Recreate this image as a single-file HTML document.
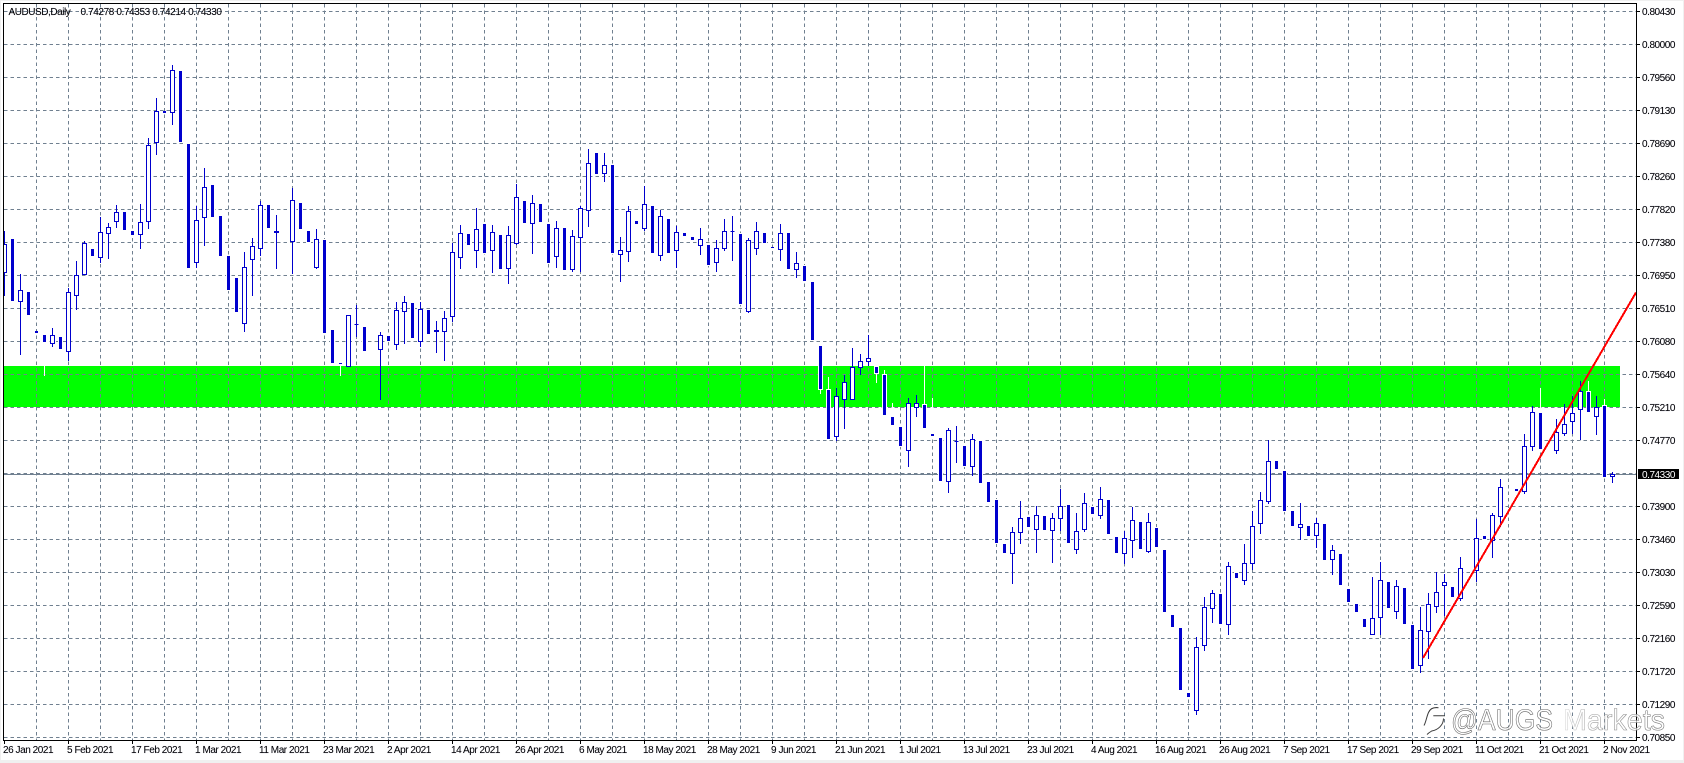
<!DOCTYPE html>
<html lang="en">
<head>
<meta charset="utf-8">
<title>AUDUSD,Daily</title>
<style>
html,body{margin:0;padding:0;background:#fff;width:1684px;height:763px;overflow:hidden}
svg{display:block}
text{font-family:"Liberation Sans",sans-serif;font-size:10px;letter-spacing:-.45px;fill:#000;stroke:rgba(0,0,50,.35);stroke-width:.2px}
</style>
</head>
<body>
<svg width="1684" height="763" viewBox="0 0 1684 763" xmlns="http://www.w3.org/2000/svg">
<defs>
<linearGradient id="wm" gradientUnits="userSpaceOnUse" x1="1563" y1="0" x2="1665" y2="0">
<stop offset="0" stop-color="#dcdcdc"/>
<stop offset=".3" stop-color="#a0a0a0"/>
<stop offset="1" stop-color="#777"/>
</linearGradient>
</defs>
<rect width="1684" height="763" fill="#fff"/>
<path d="M0 .5H1684M.5 0V763" stroke="#f0f0f0" fill="none"/>
<rect y="760" width="1684" height="3" fill="#f0f0f0"/>
<rect x="1683" width="1" height="763" fill="#f0f0f0"/>
<rect x="4" y="366" width="1616" height="41" fill="#00ff00"/>
<g fill="none" stroke="#708090" stroke-width="1">
<path stroke-dasharray="3.5 3" d="M4 11.5H1636M4 44.5H1636M4 77.5H1636M4 110.5H1636M4 143.5H1636M4 176.5H1636M4 209.5H1636M4 242.5H1636M4 275.5H1636M4 308.5H1636M4 341.5H1636M4 374.5H1636M4 407.5H1636M4 440.5H1636M4 473.5H1636M4 506.5H1636M4 539.5H1636M4 572.5H1636M4 605.5H1636M4 638.5H1636M4 671.5H1636M4 704.5H1636M4 737.5H1636"/>
<path stroke-dasharray="3.5 3" d="M36.5 4V740M68.5 4V740M100.5 4V740M132.5 4V740M164.5 4V740M196.5 4V740M228.5 4V740M260.5 4V740M292.5 4V740M324.5 4V740M356.5 4V740M388.5 4V740M420.5 4V740M452.5 4V740M484.5 4V740M516.5 4V740M548.5 4V740M580.5 4V740M612.5 4V740M644.5 4V740M676.5 4V740M708.5 4V740M740.5 4V740M772.5 4V740M804.5 4V740M836.5 4V740M868.5 4V740M900.5 4V740M932.5 4V740M964.5 4V740M996.5 4V740M1028.5 4V740M1060.5 4V740M1092.5 4V740M1124.5 4V740M1156.5 4V740M1188.5 4V740M1220.5 4V740M1252.5 4V740M1284.5 4V740M1316.5 4V740M1348.5 4V740M1380.5 4V740M1412.5 4V740M1444.5 4V740M1476.5 4V740M1508.5 4V740M1540.5 4V740M1572.5 4V740M1604.5 4V740"/>
<path d="M4 474.5H1636"/>
</g>
<g fill="none" shape-rendering="crispEdges">
<!-- bear halos + white wicks -->
<path stroke="#fff" stroke-width="5" d="M820.5 345V390M828.5 389V440M876.5 366V374M884.5 374V416M892.5 416V426M900.5 426V447M924.5 404V429M932.5 433V437M1540.5 412V450M1588.5 391V413M1604.5 405V478M12.5 238V302M28.5 291V316M44.5 334V343M60.5 336V350M92.5 248V257M124.5 211V231M132.5 230V236M180.5 70V143M188.5 143V269M212.5 184V218M220.5 215V257M228.5 255V291M236.5 277V313M268.5 204V229M300.5 202V230M308.5 230V243M324.5 239V334M332.5 329V364M364.5 326V352M388.5 335V342M412.5 302V339M428.5 309V335M468.5 233V246M484.5 223V254M500.5 234V270M524.5 200V224M540.5 203V223M548.5 223V264M564.5 227V271M596.5 152V175M612.5 164V254M652.5 205V254M668.5 218V254M708.5 244V266M740.5 233V305M764.5 232V244M788.5 232V270M804.5 265V282M812.5 281V341M940.5 437V482M964.5 445V467M980.5 440V484M988.5 481V503M996.5 499V544M1004.5 543V554M1028.5 516V528M1044.5 515V531M1068.5 504V544M1092.5 506V515M1108.5 499V535M1116.5 536V554M1140.5 521V550M1156.5 527V548M1164.5 549V613M1172.5 614V628M1180.5 627V691M1188.5 692V698M1220.5 593V625M1236.5 572V579M1276.5 460V470M1284.5 470V512M1292.5 510V527M1308.5 525V537M1324.5 523V561M1340.5 553V586M1348.5 588V603M1356.5 603V613M1364.5 618V628M1388.5 581V609M1404.5 587V625M1412.5 624V670M1452.5 586V598M1484.5 535V540M1516.5 488V492"/>
<path stroke="#fff" stroke-width="1" d="M44.5 342V376M340.5 364V376M820.5 389V394M828.5 377V390M876.5 373V383M884.5 370V375M892.5 403V417M924.5 366V405M932.5 398V434M1540.5 388V413M1588.5 381V392M1604.5 399V406"/>
<!-- bull wicks -->
<path stroke="#0000cd" stroke-width="1" d="M4.5 231V296M20.5 274V355M52.5 328V347M68.5 288V361M76.5 261V310M84.5 241V275M100.5 217V263M108.5 223V259M116.5 205V228M140.5 204V249M148.5 138V229M156.5 98V155M172.5 65V125M196.5 206V268M204.5 168V246M244.5 252V332M252.5 238V296M260.5 201V256M276.5 215V269M292.5 188V274M316.5 229V269M356.5 305V337M380.5 332V400M396.5 302V350M404.5 296V344M420.5 302V347M436.5 321V353M444.5 311V361M452.5 243V322M460.5 225V269M476.5 208V268M492.5 225V273M508.5 226V284M516.5 184V245M532.5 195V254M556.5 221V268M572.5 230V272M580.5 206V272M588.5 149V227M604.5 153V182M620.5 237V282M628.5 206V262M644.5 186V231M660.5 210V261M676.5 226V268M700.5 228V255M716.5 240V272M724.5 219V251M732.5 216V261M748.5 238V313M756.5 222V255M780.5 224V261M796.5 252V278M836.5 388V441M844.5 375V429M852.5 348V400M860.5 354V375M868.5 335V366M908.5 398V467M916.5 395V417M948.5 428V493M956.5 426V463M972.5 434V476M1012.5 527V584M1020.5 501V544M1036.5 506V553M1052.5 513V563M1060.5 489V531M1076.5 513V554M1084.5 493V532M1100.5 487V519M1124.5 531V564M1132.5 507V558M1148.5 513V553M1196.5 637V715M1204.5 597V651M1212.5 590V623M1228.5 562V635M1244.5 544V585M1252.5 511V570M1260.5 492V534M1268.5 440V504M1300.5 503V540M1316.5 518V548M1332.5 545V575M1372.5 577V635M1380.5 562V635M1396.5 580V619M1420.5 607V673M1428.5 593V659M1436.5 572V613M1444.5 574V616M1460.5 557V601M1476.5 519V582M1492.5 513V558M1500.5 479V527M1524.5 434V494M1532.5 406V451M1556.5 419V454M1564.5 404V436M1572.5 396V434M1580.5 381V440M1596.5 396V435M1612.5 472V483"/>
<!-- bull bodies -->
<path fill="#fff" stroke="#0000cd" stroke-width="1" d="M2.5 244.5h4v28h-4zM18.5 290.5h4v11h-4zM50.5 335.5h4v8h-4zM66.5 292.5h4v59h-4zM74.5 275.5h4v20h-4zM82.5 243.5h4v31h-4zM98.5 232.5h4v25h-4zM106.5 227.5h4v6h-4zM114.5 212.5h4v9h-4zM138.5 222.5h4v12h-4zM146.5 145.5h4v76h-4zM154.5 111.5h4v31h-4zM170.5 70.5h4v42h-4zM194.5 220.5h4v42h-4zM202.5 187.5h4v30h-4zM242.5 267.5h4v56h-4zM250.5 246.5h4v13h-4zM258.5 205.5h4v43h-4zM274.5 231.5h4v1h-4zM290.5 200.5h4v41h-4zM314.5 239.5h4v28h-4zM346.5 315.5h4v51h-4zM354.5 324.5h4M378.5 335.5h4v14h-4zM394.5 310.5h4v34h-4zM402.5 302.5h4v9h-4zM418.5 309.5h4v32h-4zM434.5 330.5h4v1h-4zM442.5 318.5h4v13h-4zM450.5 252.5h4v64h-4zM458.5 233.5h4v24h-4zM474.5 229.5h4v21h-4zM490.5 232.5h4v18h-4zM506.5 235.5h4v33h-4zM514.5 197.5h4v46h-4zM530.5 203.5h4v20h-4zM554.5 228.5h4v28h-4zM570.5 236.5h4v33h-4zM578.5 208.5h4v29h-4zM586.5 163.5h4v47h-4zM602.5 165.5h4v8h-4zM618.5 250.5h4v4h-4zM626.5 211.5h4v40h-4zM642.5 204.5h4v24h-4zM658.5 216.5h4v39h-4zM674.5 232.5h4v18h-4zM698.5 239.5h4v6h-4zM714.5 248.5h4v14h-4zM722.5 231.5h4v17h-4zM730.5 231.5h4M746.5 240.5h4v71h-4zM754.5 231.5h4v17h-4zM778.5 233.5h4v16h-4zM794.5 263.5h4v6h-4zM834.5 396.5h4v40h-4zM842.5 382.5h4v17h-4zM850.5 367.5h4v32h-4zM858.5 361.5h4v6h-4zM866.5 358.5h4v3h-4zM906.5 403.5h4v47h-4zM914.5 403.5h4v4h-4zM946.5 430.5h4v51h-4zM954.5 441.5h4M970.5 439.5h4v27h-4zM1010.5 532.5h4v21h-4zM1018.5 518.5h4v14h-4zM1034.5 515.5h4v14h-4zM1050.5 518.5h4v12h-4zM1058.5 506.5h4v12h-4zM1074.5 531.5h4v18h-4zM1082.5 503.5h4v26h-4zM1098.5 499.5h4v16h-4zM1122.5 538.5h4v15h-4zM1130.5 520.5h4v20h-4zM1146.5 522.5h4v29h-4zM1194.5 647.5h4v63h-4zM1202.5 607.5h4v38h-4zM1210.5 593.5h4v15h-4zM1226.5 566.5h4v58h-4zM1242.5 563.5h4v17h-4zM1250.5 526.5h4v37h-4zM1258.5 500.5h4v23h-4zM1266.5 461.5h4v40h-4zM1298.5 524.5h4v3h-4zM1314.5 523.5h4v12h-4zM1330.5 550.5h4v9h-4zM1370.5 618.5h4v16h-4zM1378.5 580.5h4v37h-4zM1394.5 586.5h4v25h-4zM1418.5 630.5h4v35h-4zM1426.5 604.5h4v27h-4zM1434.5 592.5h4v14h-4zM1442.5 582.5h4v3h-4zM1458.5 568.5h4v30h-4zM1474.5 538.5h4v32h-4zM1490.5 515.5h4v25h-4zM1498.5 487.5h4v29h-4zM1522.5 446.5h4v45h-4zM1530.5 412.5h4v34h-4zM1554.5 432.5h4v18h-4zM1562.5 424.5h4v9h-4zM1570.5 413.5h4v8h-4zM1578.5 391.5h4v18h-4zM1594.5 407.5h4v9h-4zM1610.5 474.5h4v2h-4z"/>
<!-- bear bodies -->
<path stroke="#0000cd" stroke-width="3" d="M12.5 239V301M28.5 292V315M36.5 331V333M44.5 335V342M60.5 337V349M92.5 249V256M124.5 212V230M132.5 231V235M164.5 111V113M180.5 71V142M188.5 144V268M212.5 185V217M220.5 216V256M228.5 256V290M236.5 278V312M268.5 205V228M300.5 203V229M308.5 231V242M324.5 240V333M332.5 330V363M340.5 363V364M364.5 327V351M388.5 336V341M412.5 303V338M428.5 310V334M468.5 234V245M484.5 224V253M500.5 235V269M524.5 201V223M540.5 204V222M548.5 224V263M564.5 228V270M596.5 153V174M612.5 165V253M636.5 221V224M652.5 206V253M668.5 219V253M684.5 233V236M692.5 237V240M708.5 245V265M740.5 234V304M764.5 233V243M772.5 247V248M788.5 233V269M804.5 266V281M812.5 282V340M820.5 346V389M828.5 390V439M876.5 367V373M884.5 375V415M892.5 417V425M900.5 427V446M924.5 405V428M932.5 434V436M940.5 438V481M964.5 446V466M980.5 441V483M988.5 482V502M996.5 500V543M1004.5 544V553M1028.5 517V527M1044.5 516V530M1068.5 505V543M1092.5 507V514M1108.5 500V534M1116.5 537V553M1140.5 522V549M1156.5 528V547M1164.5 550V612M1172.5 615V627M1180.5 628V690M1188.5 693V697M1220.5 594V624M1236.5 573V578M1276.5 461V469M1284.5 471V511M1292.5 511V526M1308.5 526V536M1324.5 524V560M1340.5 554V585M1348.5 589V602M1356.5 604V612M1364.5 619V627M1388.5 582V608M1404.5 588V624M1412.5 625V669M1452.5 587V597M1484.5 536V539M1516.5 489V491M1540.5 413V449M1588.5 392V412M1604.5 406V477"/>
<path stroke="#ff0000" stroke-width="2" d="M1423 658L1636 292.5"/>
</g>
<!-- frame -->
<rect x="1" y="1" width="2" height="759" fill="#fff"/>
<path d="M3.5 3V740.5M3 3.5H1637M1636.5 3V741M3 740.5H1637" stroke="#000" fill="none" shape-rendering="crispEdges"/>
<path d="M1637 11.5h3M1637 44.5h3M1637 77.5h3M1637 110.5h3M1637 143.5h3M1637 176.5h3M1637 209.5h3M1637 242.5h3M1637 275.5h3M1637 308.5h3M1637 341.5h3M1637 374.5h3M1637 407.5h3M1637 440.5h3M1637 506.5h3M1637 539.5h3M1637 572.5h3M1637 605.5h3M1637 638.5h3M1637 671.5h3M1637 704.5h3M1637 737.5h3" stroke="#000" fill="none" shape-rendering="crispEdges"/>
<path d="M4.5 741v3M68.5 741v3M132.5 741v3M196.5 741v3M260.5 741v3M324.5 741v3M388.5 741v3M452.5 741v3M516.5 741v3M580.5 741v3M644.5 741v3M708.5 741v3M772.5 741v3M836.5 741v3M900.5 741v3M964.5 741v3M1028.5 741v3M1092.5 741v3M1156.5 741v3M1220.5 741v3M1284.5 741v3M1348.5 741v3M1412.5 741v3M1476.5 741v3M1540.5 741v3M1604.5 741v3" stroke="#000" fill="none" shape-rendering="crispEdges"/>
<!-- header text -->
<text x="8.5" y="15">AUDUSD,Daily</text>
<text x="80.5" y="15" textLength="141">0.74278 0.74353 0.74214 0.74330</text>
<!-- y axis labels -->
<g>
<text x="1642" y="15">0.80430</text>
<text x="1642" y="48">0.80000</text>
<text x="1642" y="81">0.79560</text>
<text x="1642" y="114">0.79130</text>
<text x="1642" y="147">0.78690</text>
<text x="1642" y="180">0.78260</text>
<text x="1642" y="213">0.77820</text>
<text x="1642" y="246">0.77380</text>
<text x="1642" y="279">0.76950</text>
<text x="1642" y="312">0.76510</text>
<text x="1642" y="345">0.76080</text>
<text x="1642" y="378">0.75640</text>
<text x="1642" y="411">0.75210</text>
<text x="1642" y="444">0.74770</text>
<text x="1642" y="510">0.73900</text>
<text x="1642" y="543">0.73460</text>
<text x="1642" y="576">0.73030</text>
<text x="1642" y="609">0.72590</text>
<text x="1642" y="642">0.72160</text>
<text x="1642" y="675">0.71720</text>
<text x="1642" y="708">0.71290</text>
<text x="1642" y="741">0.70850</text>
</g>
<rect x="1638" y="469" width="41" height="10" fill="#000"/>
<text x="1642" y="478" style="fill:#fff;stroke:none">0.74330</text>
<!-- x axis labels -->
<g>
<text x="3" y="753">26 Jan 2021</text>
<text x="67" y="753">5 Feb 2021</text>
<text x="131" y="753">17 Feb 2021</text>
<text x="195" y="753">1 Mar 2021</text>
<text x="259" y="753">11 Mar 2021</text>
<text x="323" y="753">23 Mar 2021</text>
<text x="387" y="753">2 Apr 2021</text>
<text x="451" y="753">14 Apr 2021</text>
<text x="515" y="753">26 Apr 2021</text>
<text x="579" y="753">6 May 2021</text>
<text x="643" y="753">18 May 2021</text>
<text x="707" y="753">28 May 2021</text>
<text x="771" y="753">9 Jun 2021</text>
<text x="835" y="753">21 Jun 2021</text>
<text x="899" y="753">1 Jul 2021</text>
<text x="963" y="753">13 Jul 2021</text>
<text x="1027" y="753">23 Jul 2021</text>
<text x="1091" y="753">4 Aug 2021</text>
<text x="1155" y="753">16 Aug 2021</text>
<text x="1219" y="753">26 Aug 2021</text>
<text x="1283" y="753">7 Sep 2021</text>
<text x="1347" y="753">17 Sep 2021</text>
<text x="1411" y="753">29 Sep 2021</text>
<text x="1475" y="753">11 Oct 2021</text>
<text x="1539" y="753">21 Oct 2021</text>
<text x="1603" y="753">2 Nov 2021</text>
</g>
<!-- watermark -->
<path d="M1438.5 707.7C1433 707 1430 709 1428.5 712.5C1426.5 717 1426 722 1424 725.5M1433.3 715.7H1445M1443.5 718.5C1443.5 725 1438 730 1431.7 731C1430 732 1428.5 733 1427 734.5" fill="none" stroke="#3c3c3c" stroke-width="1"/>
<text x="1451" y="730" textLength="102" lengthAdjust="spacingAndGlyphs" style="font-size:30px;letter-spacing:0;fill:rgba(255,255,255,.7);stroke:#666;stroke-width:.6px">@AUGS</text>
<text x="1563" y="730" textLength="102" lengthAdjust="spacingAndGlyphs" style="font-size:30px;letter-spacing:0;fill:rgba(255,255,255,.7);stroke:url(#wm);stroke-width:.6px">Markets</text>
</svg>
</body>
</html>
